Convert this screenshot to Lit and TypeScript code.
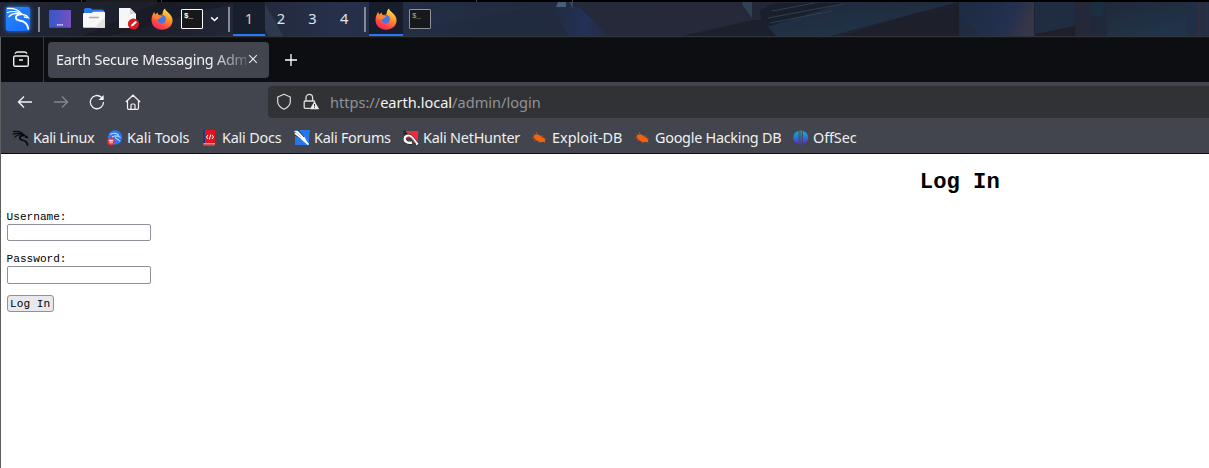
import { LitElement, html, svg, css } from 'lit';
import { customElement, property } from 'lit/decorators.js';

const dragon = (fill: string) => svg`<g fill="none" stroke=${fill} stroke-linecap="round" stroke-linejoin="round">
  <path d="M.5 1.700C5 .8 8.500 2 11 5" stroke-width="1.200"/>
  <path d="M.2 4.300C4 3 8 3.200 11 5.200" stroke-width="1.200"/>
  <path d="M2 6.800C4 5 7.500 4.300 10.500 5.300l3 1.200 1.300 1.200-2.600-.5" stroke-width="1.100"/>
  <path d="M10.700 5.400C6 5.600 5.600 9.200 9 10c3 .5 5 2 5.500 5" stroke-width="1.700"/></g>`;

const bug = svg`<g stroke="#c95b23" fill="#f0640f"><path d="M1 4l4 3M4 2l2 4M0 8l4 0M2 11l3-2M7 13l1-2M10 5l1 2M11 11h2M12 9h2" stroke-width=".7"/>
  <path d="M1.500 6.500C3 3.600 7.500 4 10.500 7.600l1.800.3.500 2 .5 2.900-2-1C8 13 3.500 11 1.500 6.500z" stroke="none"/></g>`;

const icons: Record<string, { box: string; art: unknown }> = {
  menu: { box: '0 0 26 26', art: svg`<defs><linearGradient id="k" x2="1" y2="1"><stop stop-color="#268cff"/><stop offset="1" stop-color="#1868f5"/></linearGradient></defs>
    <rect x="1" y="1" width="24" height="24" rx="2" fill="url(#k)"/>
    <g fill="none" stroke="#fff" stroke-linecap="round"><path d="M2.500 2.500c7-.3 11 1 14 5.500" stroke-width="1.300"/><path d="M2.500 6.500C7 5 13 5 16 8" stroke-width="1.200"/><path d="M4 10.500c3-3 8-3.500 12-2.500l5.500 1.500 1.800 2.300-4-.8" stroke-width="1.300"/><path d="M16 8.200c-6.500.3-6.500 5.500-1.500 6.300 4.500.5 8 2.900 8.700 8.200" stroke-width="1.900"/></g>` },
  desktop: { box: '0 0 22 18', art: svg`<defs><linearGradient id="d" x2="1"><stop stop-color="#3458cb"/><stop offset="1" stop-color="#7950bd"/></linearGradient></defs><rect width="22" height="17.700" rx=".7" fill="url(#d)"/><path d="M8 14.800h6" stroke="#fff" stroke-width="1.300" stroke-dasharray="1.500 .7"/>` },
  folder: { box: '0 0 22 20', art: svg`<path d="M1 1.500Q1 0 2.500 0h5l1.800 1.500H19q2 0 2 1.500v6H1z" fill="#2c75e5"/><path d="M0 6q0-1 1-1h7.500l2-1.300H21q1 0 1 1V18.500q0 1.200-1 1.200H1q-1 0-1-1.200z" fill="#f7f7f7"/><path d="M12 19.700L22 9v10.700z" fill="#e3e3e3"/><path d="M6.500 9.500h9" stroke="#aaa" stroke-width="1.300" stroke-linecap="round"/>` },
  editor: { box: '0 0 22 24', art: svg`<path d="M1 1h11l6 6v14H1z" fill="#f6f6f6"/><path d="M12 1v6h6z" fill="#d8d8d8"/><circle cx="15.500" cy="17" r="5.600" fill="#d81c22"/><path d="M13 19.500l.5-2 4-3.800 1.500 1.500-4 3.800z" fill="#fff"/>` },
  firefox: { box: '0 0 22 22', art: svg`<defs><linearGradient id="f" x1=".8" x2=".3" y2="1"><stop stop-color="#fff044"/><stop offset=".4" stop-color="#ff9a2c"/><stop offset=".8" stop-color="#ff3e47"/><stop offset="1" stop-color="#e92b65"/></linearGradient></defs>
    <path d="M3 4l1.500 2.500 2-2 1 2.500 4-.5c0-3 1-5 2.500-6 .3 3 7 5 7.500 11 .5 6-4.500 10.300-10.500 10.300S.4 17.500.5 11.500C.6 8 2 6 3 4z" fill="url(#f)"/><circle cx="10.700" cy="11.300" r="4.200" fill="#4376e8"/><path d="M2 7c2.500-1.500 5 .4 6.500 1l3 .2c-.5 1.600-3 1.500-4 3-3 .6-5.500-1.600-5.500-4.200z" fill="#ff812f"/>` },
  shield: { box: '0 0 16 18', art: svg`<path d="M8 1.300L14.300 4v4.500c0 3.300-3 6.300-6.300 7.800-3.300-1.500-6.300-4.500-6.300-7.800V4z" fill="none" stroke="#dededf" stroke-width="1.200" stroke-linejoin="round"/>` },
  lock: { box: '0 0 16 18', art: svg`<path d="M7 15.300H2.200q-1 0-1-1V9q0-1 1-1h8.600q.8 0 1 .8M3 8V4.700a3.300 3.300 0 0 1 6.600 0V8" fill="none" stroke="#dededf" stroke-width="1.300"/><path d="M11.500 8.800l4.200 7.100H7.300z" fill="#eee" stroke="#eee" stroke-width=".7" stroke-linejoin="round"/><path d="M11.500 11v2.400m0 .8v.9" stroke="#333" stroke-width="1"/>` },
  view: { box: '0 0 18 18', art: svg`<rect x="1.700" y="6" width="14.600" height="10.300" rx="1.600" fill="none" stroke="#eee" stroke-width="1.400"/><path d="M3 3.700Q4 2 5.500 2h7Q14 2 15 3.700M7 10h4" fill="none" stroke="#eee" stroke-width="1.300"/>` },
  back: { box: '0 0 16 16', art: svg`<path d="M15 8H1.600M7 2.500L1.500 8 7 13.500" fill="none" stroke="#f2f2f3" stroke-width="1.400"/>` },
  forward: { box: '0 0 16 16', art: svg`<path d="M1 8h13.400M9 2.500L14.500 8 9 13.500" fill="none" stroke="#858589" stroke-width="1.400"/>` },
  reload: { box: '0 0 16 16', art: svg`<path d="M14.500 8A6.600 6.600 0 1 1 12.400 3.300L14 5" fill="none" stroke="#f2f2f3" stroke-width="1.300"/><path d="M14.700 1v5H9.500z" fill="#f2f2f3"/>` },
  home: { box: '0 0 16 16', art: svg`<path d="M.8 8L8 1.200 15.200 8M2.500 6.800V14q0 1.300 1.300 1.300h8.400q1.300 0 1.300-1.300V6.800M6 15v-4q0-1 1-1h2q1 0 1 1v4" fill="none" stroke="#f2f2f3" stroke-width="1.200"/>` },
  close: { box: '0 0 10 10', art: svg`<path d="M1.200 1.200l7.600 7.600M8.800 1.200L1.200 8.800" stroke="#eee" stroke-width="1.100"/>` },
  plus: { box: '0 0 12 12', art: svg`<path d="M6 0v12M0 6h12" stroke="#fff" stroke-width="1.300"/>` },
  chevron: { box: '0 0 10 6', art: svg`<path d="M1.300 1.200L5 4.700l3.700-3.500" fill="none" stroke="#fff" stroke-width="1.700"/>` },
  linux: { box: '0 0 16 16', art: dragon('#08090b') },
  tools: { box: '0 0 16 16', art: svg`<circle cx="8" cy="7.500" r="7.200" fill="#2777ff"/><g fill="none" stroke="#fff"><path d="M3 4.500c4-2 6-1.500 9 1M5 7c4-2 6-1 8.500.5M9 6.500c-2 3 3 2 4 5" stroke-width=".9"/></g><circle cx="4" cy="11.500" r="3.800" fill="#f02b35"/><path d="M1.700 10.200h4.600M3.200 10v3.500M5 10v3.500" stroke="#fff" stroke-width=".9"/>` },
  docs: { box: '0 0 16 16', art: svg`<path d="M1 0h3v13H1z" fill="#103d88"/><path d="M3 0h10v13H3z" fill="#e6121d"/><path d="M1.500 13h11.500v2.500H1.500z" fill="#b5aaaa"/><path d="M1.500 15H13" stroke="#de111b"/><path d="M6 5L4.500 7 6 9M10 5l1.500 2L10 9M8.700 4.500l-1.300 5" fill="none" stroke="#fff"/>` },
  forums: { box: '0 0 16 16', art: svg`<path d="M1 0H16L14.500 15H1z" fill="#2878ed"/><path d="M0 1l4 0 6.500 6 4 7.500-4.500-3-6-5z" fill="#fff"/><path d="M1 2l8 7M4 0l6 7M1 5l8 5" stroke="#182033" stroke-width=".9"/><path d="M1 3l8 6.500 5.500 5" stroke="#fff" stroke-width="1.800"/>` },
  hunter: { box: '0 0 16 16', art: svg`<path d="M2 1h13.500l-1 12z" fill="#f02b3e"/><path d="M0 1l3 1M0 4l4-1" stroke="#171717"/><path d="M14 14L9.500 8C7 4.500 2 5.500 1.700 8.500S4.500 13.500 9 12.500" fill="none" stroke="#17181b" stroke-width="3.400"/><path d="M14.500 14.500L9.500 8C7 4.500 2 5.500 1.700 8.500S4.500 13.500 9 12.500" fill="none" stroke="#fff" stroke-width="2.400"/><path d="M3 9C4 6 7 6.500 9 8.500l4 5.500" fill="none" stroke="#e92d40" stroke-width="1"/>` },
  bug: { box: '0 0 16 16', art: bug },
  offsec: { box: '0 0 16 16', art: svg`<defs><linearGradient id="o" x2="0" y2="1"><stop stop-color="#10b5c6"/><stop offset=".5" stop-color="#2875d5"/><stop offset="1" stop-color="#6527d8"/></linearGradient></defs><path d="M5.500 1v13C-1.500 12-1.500 3 5.500 1zM10 1v13C17 12 17 3 10 1z" fill="url(#o)"/><path d="M6.500.5h1V15h-1zM8.200.5h1V15h-1z" fill="url(#o)"/>` },
};

@customElement('ui-icon')
class UiIcon extends LitElement {
  static styles = css`:host { display: block; flex: none; } .art { display: block; width: 100%; height: 100%; overflow: visible; }`;
  @property() name = '';
  render() {
    const i = icons[this.name];
    return i ? html`<svg class="art" viewBox=${i.box}>${i.art}</svg>` : null;
  }
}

// icon, label, item width, letter spacing
const bookmarks: [string, string, number, number][] = [
  ['linux', 'Kali Linux', 94, -.36], ['tools', 'Kali Tools', 95, -.08], ['docs', 'Kali Docs', 92, -.2], ['forums', 'Kali Forums', 109, -.25],
  ['hunter', 'Kali NetHunter', 129, -.22], ['bug', 'Exploit-DB', 103, .02], ['bug', 'Google Hacking DB', 158, -.26], ['offsec', 'OffSec', 70, -.1],
];

@customElement('app-root')
class AppRoot extends LitElement {
  static styles = css`
    * { box-sizing: border-box; }
    :host { display: block; width: 100%; height: 468px; overflow: hidden; background: #fff; font-family: "Noto Sans", sans-serif; }
    .top { height: 2px; background: linear-gradient(90deg, #000 81px, #444 81px 82px, #000 82px 86px, #1c1c1c 86px 157px, #000 157px 161px, #444 161px 162px, #000 162px 476px, #444 476px 477px, #000 477px 572px, #444 572px 573px, #000 573px); }
    .panel { height: 35px; display: grid; overflow: hidden; background: #202638; }
    .wall, .launchers { grid-area: 1 / 1; }
    .wall { width: 1209px; height: 35px; display: block; }
    .launchers { display: flex; align-items: center; padding: 0 0 1px 5px; z-index: 1; }
    .menu { width: 26px; height: 26px; filter: drop-shadow(0 0 2px #287df5); }
    .bar { width: 2px; height: 25px; background: #858993; flex: none; }
    .bar.first { margin: 0 9px 0 7px; }
    .bar.last { margin-left: 4px; }
    .desktop { width: 22px; height: 18px; margin-right: 12px; }
    .folder { width: 22px; height: 20px; margin: 0 13px 2px 0; }
    .editor { width: 22px; height: 24px; margin-right: 11px; }
    .fox { width: 22px; height: 22px; }
    .term { width: 22px; height: 20px; border: 1px solid #fff; background: #171819; color: #fff; font: bold 7.500px/8px "Liberation Mono", monospace; padding: 2px 0 0 2px; flex: none; border-radius: 1px; }
    .term.first { margin: 0 7px 0 8px; }
    .term.dim { color: #a7a9ab; border-color: #8e9298; margin-left: 6px; font-weight: normal; }
    .chevron { width: 9px; height: 6px; margin-right: 9px; }
    .space { width: 31.700px; height: 34px; display: grid; place-items: center; font-size: 14.700px; color: #dee5ec; flex: none; padding-bottom: 2px; }
    .space.on { width: 32px; background: #171e2c; box-shadow: inset 0 -2px #2878f5; margin-left: 3px; color: #ecc9a3; }
    .task { width: 34px; height: 34px; margin-left: 3px; background: #171d2b; box-shadow: inset 0 -2px #2878f5; display: grid; place-items: center; flex: none; }
    .window { height: 431px; border-left: 1px solid #5e5f61; }
    .tabs { height: 45px; background: #0d0e12; border-top: 1px solid #15161a; display: flex; align-items: center; padding-bottom: 1px; }
    .viewbox { width: 43px; height: 45px; border-right: 1px solid #38393d; padding: 13px 0 0 11px; flex: none; }
    .view { width: 18px; height: 18px; }
    .tab { width: 221px; height: 36px; margin-left: 4px; border-radius: 4px; background: #42454d; color: #f2f2f3; display: flex; align-items: center; padding: 0 11px 0 8px; flex: none; }
    .title { width: 190px; white-space: nowrap; font-size: 14.400px; letter-spacing: -.23px; line-height: 24px; mask-image: linear-gradient(to right, #000 155px, #0004 188px); }
    .close { width: 10px; height: 10px; margin: 0 0 1px 2px; }
    .plus { width: 12px; height: 12px; margin-left: 16px; }
    .nav { height: 40px; background: #42454d; display: flex; align-items: center; padding-left: 16px; }
    .go { width: 16px; height: 16px; margin-right: 20px; }
    .go.home { margin-right: 127px; }
    .url { flex: 1; height: 32px; background: #303236; border-radius: 4px 0 0 4px; display: flex; align-items: center; padding-left: 8px; font-size: 14.550px; color: #929397; white-space: nowrap; }
    .shield, .lock { width: 16px; height: 18px; }
    .lock { margin: 0 11px 0 11px; }
    .host { color: #f4f4f4; }
    .marks { height: 32px; background: #42454d; border-bottom: 1px solid #0d0e11; display: flex; align-items: center; padding: 1px 0 0 12px; color: #f0f0f1; font-size: 14.400px; line-height: 24px; }
    .mark { display: flex; align-items: center; gap: 4px; white-space: nowrap; flex: none; }
    .fav { width: 16px; height: 16px; }
    .page { width: 1918px; height: 314px; background: #fff; color: #000; font: 11.100px/13px "Liberation Mono", monospace; padding: 16px 6px 0 5.600px; }
    .heading { margin: 0; text-align: center; font-size: 22.200px; line-height: 26px; }
    .field { display: block; height: 42px; }
    .form { padding-top: 15px; }
    .input { display: block; width: 144px; height: 17px; border: 1px solid #8f8f9d; border-radius: 2px; padding: 0 2px; background: #fff; outline: 0; }
    .input.tall { height: 18px; }
    .submit { display: block; width: 47px; height: 17px; border: 1px solid #8f8f9d; border-radius: 3px; background: #e9e9ed; color: #000; font: inherit; padding: 1px 0 0; white-space: nowrap; }
  `;
  render() {
    return html`
      <div class="top"></div>
      <div class="panel">
        <svg class="wall" viewBox="0 0 1209 35" preserveAspectRatio="none">
          <defs><linearGradient id="w"><stop stop-color="#202738"/><stop offset=".12" stop-color="#1d202a"/><stop offset=".28" stop-color="#27304a"/><stop offset=".4" stop-color="#202b40"/><stop offset=".6" stop-color="#24283a"/><stop offset=".8" stop-color="#1d202b"/><stop offset="1" stop-color="#213047"/></linearGradient>
          <linearGradient id="b" x2="1" y2=".2"><stop stop-color="#1e2b42"/><stop offset=".75" stop-color="#23304f"/><stop offset="1" stop-color="#363648"/></linearGradient>
          <linearGradient id="c" y2="1" x2=".5"><stop stop-color="#20293a"/><stop offset="1" stop-color="#203449"/></linearGradient>
          <linearGradient id="e"><stop stop-color="#233158" stop-opacity="0"/><stop offset=".6" stop-color="#233158"/><stop offset="1" stop-color="#26293a"/></linearGradient></defs>
          <rect width="1209" height="35" fill="url(#w)"/>
          <path d="M105 35L240 0h-80L80 35z" fill="#171a22" opacity=".65"/><path d="M252 0h12l20 35h-15z" fill="#35485d" opacity=".5"/>
          <path d="M375 35L530 5h-90l-30 30z" fill="#253149" opacity=".4"/><path d="M550 5h29l31 30h-40z" fill="url(#e)"/>
          <path d="M579 2h160l15 15-76 18h-67z" fill="#26293a"/><path d="M678 35l76-17h15l9 17z" fill="#1c202c"/>
          <path d="M742 0h10v16l-9-12z" fill="#304256"/><path d="M763 5l15-5h180L826 35h-49l-10-12z" fill="url(#c)"/>
          <path d="M760 9q7-7 18-8h65l-73 23q-10-3-10-15z" fill="#1a202b"/><path d="M768 16l75-14M770 21l62-12M772 9l43-8" stroke="#2d3f50" fill="none"/>
          <path d="M839 35L920 10h40v25z" fill="#1d202b"/><path d="M959 0h75v35h-75z" fill="url(#b)"/><path d="M959 14l20 17-20 4z" fill="#202b42"/>
          <path d="M1035 0h40v24l-40 10z" fill="#202c42"/><path d="M1035 32l40-8v11h-40z" fill="#201f29"/><path d="M1076 0h15v35h-15z" fill="#242839"/><path d="M1092 0h13l-3 14h-10z" fill="#1a3040"/>
          <path d="M1107 0h80v35h-80z" fill="url(#c)"/><path d="M1197 0h4l1 35h-5zM1205 0h3v35h-3z" fill="#302d40"/><path d="M558 0h8v5h-10z" fill="#466077"/><path d="M569 0h4v7z" fill="#344a60"/>
          <path d="M0 34.500h1209" stroke="#30343b"/>
        </svg>
        <div class="launchers">
          <ui-icon class="menu" name="menu"></ui-icon><div class="bar first"></div>
          <ui-icon class="desktop" name="desktop"></ui-icon><ui-icon class="folder" name="folder"></ui-icon>
          <ui-icon class="editor" name="editor"></ui-icon><ui-icon class="fox" name="firefox"></ui-icon>
          <div class="term first">$_</div><ui-icon class="chevron" name="chevron"></ui-icon><div class="bar"></div>
          <div class="space on">1</div>${['2', '3', '4'].map(n => html`<div class="space">${n}</div>`)}
          <div class="bar last"></div><div class="task"><ui-icon class="fox" name="firefox"></ui-icon></div><div class="term dim">$_</div>
        </div>
      </div>
      <div class="window">
        <div class="tabs"><div class="viewbox"><ui-icon class="view" name="view"></ui-icon></div>
          <div class="tab"><div class="title">Earth Secure Messaging Adm</div><ui-icon class="close" name="close"></ui-icon></div><ui-icon class="plus" name="plus"></ui-icon></div>
        <div class="nav">
          <ui-icon class="go" name="back"></ui-icon><ui-icon class="go" name="forward"></ui-icon><ui-icon class="go" name="reload"></ui-icon><ui-icon class="go home" name="home"></ui-icon>
          <div class="url"><ui-icon class="shield" name="shield"></ui-icon><ui-icon class="lock" name="lock"></ui-icon><span>https://<span class="host">earth.local</span>/admin/login</span></div>
        </div>
        <div class="marks">${bookmarks.map(([i, t, w, s]) => html`<div class="mark" style="width:${w}px;letter-spacing:${s}px"><ui-icon class="fav" name=${i}></ui-icon><span>${t}</span></div>`)}</div>
        <div class="page"><h1 class="heading">Log In</h1><div class="form">
          <label class="field">Username:<input class="input" type="text"></label>
          <label class="field">Password:<input class="input tall" type="password"></label>
          <button class="submit">Log In</button></div></div>
      </div>`;
  }
}
